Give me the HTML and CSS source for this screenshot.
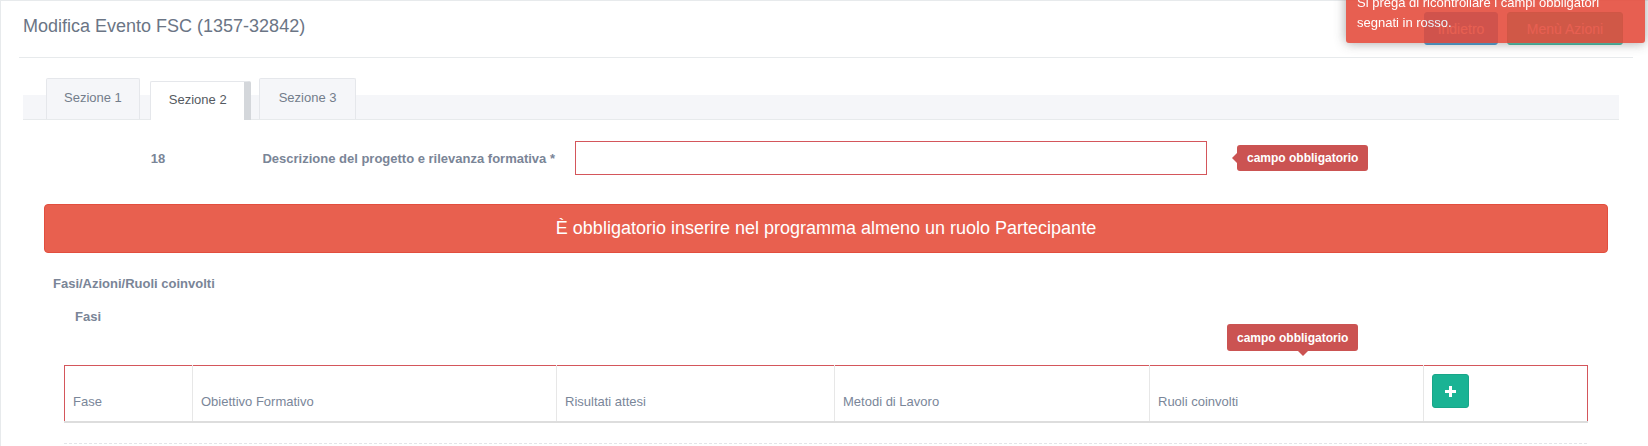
FILE: index.html
```html
<!DOCTYPE html>
<html lang="it">

<head>
    <meta charset="UTF-8">
    <meta name="viewport" content="width=device-width, initial-scale=1.0">
    <title>Modifica Evento FSC</title>
    <link rel="stylesheet" href="styles.css">
</head>

<body>
    <div class="wrapper">
        <div class="page-heading">
            <h2>Modifica Evento FSC (1357-32842)</h2>
            <div class="actions">
                <button class="btn btn-success">Indietro</button>
                <button class="btn btn-primary">Menù Azioni <span class="caret"></span></button>
            </div>
        </div>

        <div class="tabs-container">
            <ul class="nav-tabs">
                <li class="tab">Sezione 1</li>
                <li class="tab active">Sezione 2</li>
                <li class="tab">Sezione 3</li>
            </ul>

            <div class="tab-content">
                <div class="form-row">
                    <div class="num">18</div>
                    <label class="lbl">Descrizione del progetto e rilevanza formativa *</label>
                    <input class="form-control has-error" type="text">
                    <div class="tip tip-right">campo obbligatorio</div>
                </div>

                <div class="alert">È obbligatorio inserire nel programma almeno un ruolo Partecipante</div>

                <h4 class="section-title">Fasi/Azioni/Ruoli coinvolti</h4>
                <h5 class="sub-title">Fasi</h5>

                <div class="table-wrap">
                    <div class="tip tip-top">campo obbligatorio</div>
                    <table class="fasi">
                        <colgroup>
                            <col style="width: 128px">
                            <col style="width: 364px">
                            <col style="width: 278px">
                            <col style="width: 315px">
                            <col style="width: 274px">
                            <col style="width: 164px">
                        </colgroup>
                        <thead>
                            <tr>
                                <th>Fase</th>
                                <th>Obiettivo Formativo</th>
                                <th>Risultati attesi</th>
                                <th>Metodi di Lavoro</th>
                                <th>Ruoli coinvolti</th>
                                <th>
                                    <button class="btn btn-primary btn-add">
                                        <svg width="11" height="11" viewBox="0 0 11 11">
                                            <rect x="4" y="0" width="3" height="11" fill="#fff"/>
                                            <rect x="0" y="4" width="11" height="3" fill="#fff"/>
                                        </svg>
                                    </button>
                                </th>
                            </tr>
                        </thead>
                    </table>
                </div>
                <div class="hr-dashed"></div>
            </div>
        </div>
    </div>

    <div class="toast">Si prega di ricontrollare i campi obbligatori segnati in rosso.</div>
</body>

</html>
```

FILE: styles.css
```css
* {
    box-sizing: border-box;
}

html,
body {
    margin: 0;
    padding: 0;
}

body {
    font-family: "Liberation Sans", Arial, sans-serif;
    font-size: 13px;
    color: #6b7483;
    background-color: #fff;
    overflow: hidden;
}

.wrapper {
    height: 100vh;
    border-left: 1px solid #e7eaec;
    border-top: 1px solid #e7eaec;
    padding: 0 15px 0 18px;
}

/* heading */
.page-heading {
    display: flex;
    justify-content: space-between;
    align-items: flex-start;
    height: 57px;
    padding: 0 10px 0 4px;
    border-bottom: 1px solid #e7eaec;
}

.page-heading h2 {
    margin: 15px 0 0;
    font-size: 18px;
    line-height: 20px;
    font-weight: normal;
    color: #6b7585;
}

.actions {
    display: flex;
    gap: 9px;
    margin-top: 11px;
}

.btn {
    font-family: inherit;
    font-size: 14px;
    line-height: 20px;
    height: 33px;
    padding: 6px 12px;
    color: #fff;
    border: 1px solid transparent;
    border-radius: 3px;
}

.btn-success {
    width: 74px;
    background-color: #1c84c6;
    border-color: #1c84c6;
}

.btn-primary {
    width: 116px;
    background-color: #1ab394;
    border-color: #18a689;
}

.caret {
    display: inline-block;
    margin-left: 2px;
    vertical-align: middle;
    border-top: 4px solid #fff;
    border-left: 4px solid transparent;
    border-right: 4px solid transparent;
}

/* tabs */
.tabs-container {
    margin: 20px 14px 0 4px;
}

.nav-tabs {
    list-style: none;
    margin: 0;
    padding: 0 0 0 23px;
    display: flex;
    align-items: flex-end;
    height: 42px;
    background: linear-gradient(to bottom, transparent 17px, #f5f6f9 17px);
    border-bottom: 1px solid #e7eaec;
}

.tab {
    height: 41px;
    padding: 10px 17px 0;
    line-height: 18px;
    color: #737d8b;
    background-color: #f5f6f9;
    border: 1px solid #e5e7eb;
    border-bottom: none;
    border-radius: 2px 2px 0 0;
    margin-right: 10px;
}

.tab:last-child {
    padding: 10px 19px 0;
}

.tab.active {
    height: 39px;
    margin-bottom: -1px;
    margin-right: 8px;
    padding: 9px 17px 0 18px;
    color: #555a61;
    background-color: #fff;
    border-right: 7px solid #d4d7db;
}

/* form */
.form-row {
    display: flex;
    align-items: center;
    margin-top: 21px;
    height: 34px;
}

.num,
.lbl,
.section-title,
.sub-title {
    font-weight: bold;
    color: #7a8597;
}

.num {
    width: 100px;
    margin-left: 85px;
    text-align: center;
}

.lbl {
    width: 347px;
    text-align: right;
}

.form-control {
    width: 632px;
    height: 34px;
    margin-left: 20px;
    border: 1px solid #e5e6e7;
    background-color: #fff;
}

.form-control.has-error {
    border-color: #d4565b;
}

.tip {
    position: relative;
    width: 131px;
    padding: 4px 10px;
    font-size: 12px;
    line-height: 18px;
    font-weight: bold;
    color: #fff;
    background-color: #cb5352;
    border-radius: 3px;
    white-space: nowrap;
}

.tip::before {
    content: "";
    position: absolute;
    border: 5px solid transparent;
}

.tip-right {
    margin-left: 30px;
}

.tip-right::before {
    left: -10px;
    top: 8px;
    border-right-color: #cb5352;
}

.tip-top {
    position: absolute;
    left: 1163px;
    top: -41px;
    height: 27px;
    padding-top: 5px;
}

.tip-top::before {
    left: 71px;
    bottom: -10px;
    border-top-color: #cb5352;
}

.alert {
    margin: 29px 11px 0 21px;
    padding: 14px;
    font-size: 18px;
    line-height: 19px;
    text-align: center;
    color: #fff;
    background-color: #e8604f;
    border: 1px solid #e24e3e;
    border-radius: 4px;
}

.section-title {
    margin: 22px 0 0 30px;
    font-size: 13px;
    line-height: 18px;
}

.sub-title {
    margin: 15px 0 0 52px;
    font-size: 13px;
    line-height: 18px;
}

/* fasi table */
.table-wrap {
    position: relative;
    width: 1523px;
    margin: 39px 0 0 41px;
}

.fasi {
    width: 100%;
    table-layout: fixed;
    border-collapse: collapse;
}

.fasi th {
    padding: 8px 8px 10px;
    text-align: left;
    vertical-align: bottom;
    font-weight: normal;
    line-height: 18.5px;
    color: #7a8699;
    border: 1px solid #e7e7e7;
    border-top-color: #d4565b;
    border-bottom: 2px solid #dddddd;
}

.fasi th:first-child {
    border-left-color: #d4565b;
}

.fasi th:last-child {
    border-right-color: #d4565b;
}

.btn-add {
    width: 37px;
    height: 34px;
    margin-bottom: 3px;
    padding: 0;
    display: flex;
    align-items: center;
    justify-content: center;
}

.hr-dashed {
    width: 1523px;
    margin: 20px 0 0 41px;
    border-top: 1px dashed #e3e5e8;
}

/* notification */
.toast {
    position: fixed;
    top: -17px;
    right: 3px;
    width: 299px;
    padding: 10px 12px 10px 11px;
    line-height: 20px;
    color: #fff;
    background-color: rgb(229, 78, 63);
    opacity: 0.9;
    border-radius: 0 0 3px 3px;
    box-shadow: 0 0 12px #999;
}
```
